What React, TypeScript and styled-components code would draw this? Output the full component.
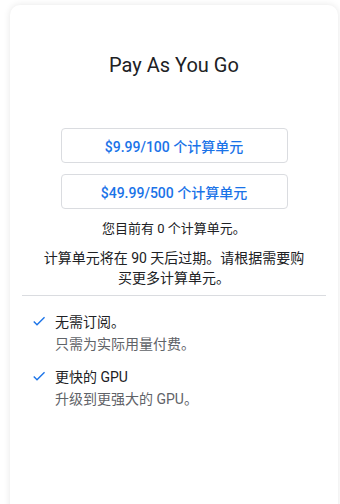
import React, { FC } from 'react';
import styled, { createGlobalStyle } from 'styled-components';

const GlobalStyle = createGlobalStyle`
  body {
    margin: 0;
    background: #ffffff;
    font-family: Roboto, "Noto Sans CJK SC", "Noto Sans", sans-serif;
    color: #202124;
  }
`

type Feature = {
    title: string
    sub: string
}

const packs = ['$9.99/100 个计算单元', '$49.99/500 个计算单元'];

const features: Feature[] = [
    {title: '无需订阅。', sub: '只需为实际用量付费。'},
    {title: '更快的 GPU', sub: '升级到更强大的 GPU。'},
];

const CheckIcon: FC = () => (
    <CheckSvg viewBox="0 0 24 24">
        <path d="M9 16.17L4.83 12l-1.42 1.41L9 19 21 7l-1.41-1.41z" fill="#1a73e8"/>
    </CheckSvg>
);

const App: FC = () => {
    return (
        <>
            <GlobalStyle/>
            <Card>
                <Title>Pay As You Go</Title>
                <PackList>
                    {packs.map(p => (
                        <PackButton key={p}>{p}</PackButton>
                    ))}
                </PackList>
                <Balance>您目前有 0 个计算单元。</Balance>
                <Note>计算单元将在 90 天后过期。请根据需要购买更多计算单元。</Note>
                <Divider/>
                <FeatureList>
                    {features.map(f => (
                        <FeatureRow key={f.title}>
                            <CheckIcon/>
                            <FeatureText>
                                <FeatureTitle>{f.title}</FeatureTitle>
                                <FeatureSub>{f.sub}</FeatureSub>
                            </FeatureText>
                        </FeatureRow>
                    ))}
                </FeatureList>
            </Card>
        </>
    )
};

export default App;

let Card = styled.div`
  box-sizing: border-box;
  width: 328px;
  min-height: 520px;
  margin: 5px 0 0 10px;
  padding: 46px 12px 0;
  background: #ffffff;
  border-radius: 10px;
  box-shadow: 0 0 7px rgba(0, 0, 0, 0.1);
  display: flex;
  flex-direction: column;
`

let Title = styled.h1`
  margin: 0;
  font-size: 20px;
  line-height: 28px;
  font-weight: 400;
  text-align: center;
  color: #202124;
`

let PackList = styled.div`
  width: 227px;
  margin: 49px auto 0;
  display: flex;
  flex-direction: column;
  gap: 11px;
`

let PackButton = styled.button`
  height: 35px;
  background: #ffffff;
  border: 1px solid #dadce0;
  border-radius: 4px;
  font-family: Roboto, "Noto Sans CJK SC", sans-serif;
  font-size: 14px;
  font-weight: 500;
  color: #1a73e8;
  cursor: pointer;
`

let Balance = styled.div`
  margin-top: 10px;
  font-size: 13px;
  line-height: 20px;
  text-align: center;
`

let Note = styled.div`
  max-width: 268px;
  margin: 9px auto 0;
  font-size: 14px;
  line-height: 20px;
  text-align: center;
`

let Divider = styled.hr`
  width: 100%;
  margin: 7px 0 0;
  border: none;
  border-top: 1px solid #dadce0;
`

let FeatureList = styled.div`
  padding: 15px 0 0 9px;
  display: flex;
  flex-direction: column;
  gap: 11px;
`

let FeatureRow = styled.div`
  display: flex;
  align-items: flex-start;
  gap: 8px;
`

let CheckSvg = styled.svg`
  width: 16px;
  height: 16px;
  margin-top: 2px;
  flex-shrink: 0;
`

let FeatureText = styled.div`
  display: flex;
  flex-direction: column;
  font-size: 14px;
  line-height: 22px;
`

let FeatureTitle = styled.div`
  color: #202124;
`

let FeatureSub = styled.div`
  color: #5f6368;
`
